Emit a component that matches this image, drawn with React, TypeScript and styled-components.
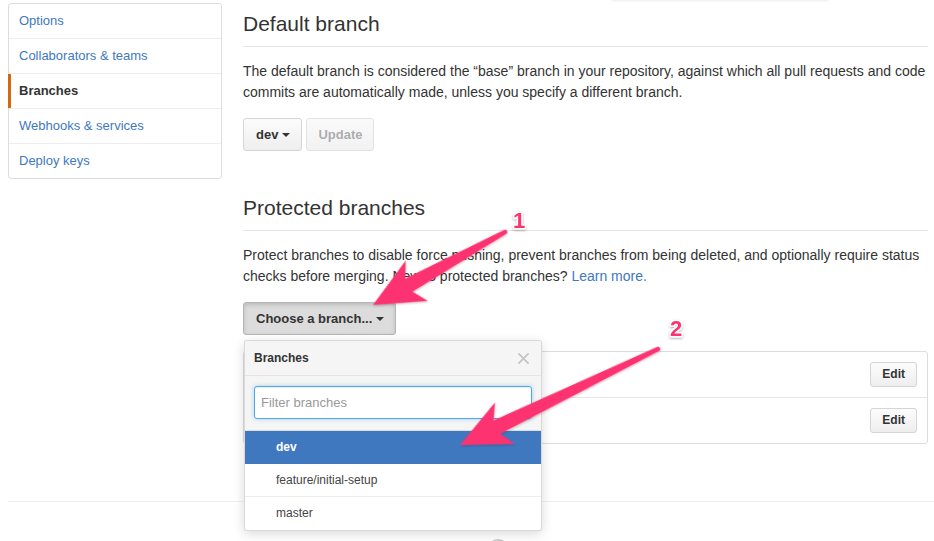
import React from "react";
import styled, { createGlobalStyle, css } from "styled-components";

const GlobalStyle = createGlobalStyle`
  html, body {
    margin: 0;
    padding: 0;
    overflow: hidden;
    background: #fff;
  }
  body {
    font-family: "Liberation Sans", Arial, Helvetica, sans-serif;
    font-size: 14px;
    line-height: 21px;
    color: #333;
  }
  * { box-sizing: border-box; }
`;

const Page = styled.div`
  position: relative;
  width: 934px;
  height: 541px;
  overflow: hidden;
`;

const Container = styled.div`
  margin-left: 8px;
  width: 980px;
`;

const Columns = styled.div`
  display: grid;
  grid-template-columns: 214px 685px;
  column-gap: 21px;
  align-items: start;
`;

const SideMenu = styled.nav`
  margin-top: 3px;
  border: 1px solid #ddd;
  border-radius: 3px;
  background: #fff;
  display: flex;
  flex-direction: column;
`;

const SideItem = styled.a<{ $selected?: boolean }>`
  position: relative;
  display: block;
  padding: 8px 10px;
  line-height: 18px;
  font-size: 13px;
  color: #4078c0;
  text-decoration: none;
  border-bottom: 1px solid #eee;
  &:last-child { border-bottom: 0; }
  ${(p) =>
    p.$selected &&
    css`
      color: #333;
      font-weight: bold;
      &::before {
        content: "";
        position: absolute;
        left: -1px;
        top: 0;
        bottom: 0;
        width: 3px;
        background: #d26911;
      }
    `}
`;

const Main = styled.main`
  display: flex;
  flex-direction: column;
  align-items: stretch;
`;

const Subhead = styled.div<{ $spaced?: boolean }>`
  padding-top: 9px;
  padding-bottom: 7px;
  border-bottom: 1px solid #e5e5e5;
  margin-top: ${(p) => (p.$spaced ? "33px" : "0")};
`;

const SubheadTitle = styled.h2`
  margin: 0;
  font-size: 21px;
  line-height: 30px;
  font-weight: normal;
  color: #333;
`;

const Para = styled.p`
  margin: 14px 0 15px;
  font-size: 14px;
  line-height: 21px;
  color: #333;
`;

const Link = styled.a`
  color: #4078c0;
  text-decoration: none;
`;

const ButtonRow = styled.div`
  display: flex;
  gap: 4px;
  align-items: flex-start;
`;

const Btn = styled.button<{ $active?: boolean; $small?: boolean }>`
  display: inline-flex;
  align-items: center;
  padding: 6px 11px 6px 12px;
  font-family: "Liberation Sans", Arial, Helvetica, sans-serif;
  font-size: 13px;
  font-weight: bold;
  line-height: 19px;
  color: #333;
  background: linear-gradient(#fcfcfc, #eee);
  border: 1px solid #d5d5d5;
  border-radius: 3px;
  cursor: pointer;
  white-space: nowrap;
  &:disabled {
    padding: 6px 11px;
    color: rgba(51, 51, 51, 0.4);
    background: linear-gradient(#fafafa, #f2f2f2);
    border-color: #e3e3e3;
    cursor: default;
  }
  ${(p) =>
    p.$active &&
    css`
      background: #dcdcdc;
      border-color: #b5b5b5;
      box-shadow: inset 0 2px 4px rgba(0, 0, 0, 0.15);
    `}
  ${(p) =>
    p.$small &&
    css`
      padding: 3px 11px;
      font-size: 12px;
      line-height: 17px;
    `}
`;

const Caret = styled.span`
  display: inline-block;
  width: 0;
  height: 0;
  margin-left: 4px;
  border-top: 4px solid #333;
  border-left: 4px solid transparent;
  border-right: 4px solid transparent;
`;

const MenuWrap = styled.div`
  position: relative;
  align-self: flex-start;
`;

const MenuModal = styled.div`
  position: absolute;
  top: calc(100% + 5px);
  left: 1px;
  width: 298px;
  z-index: 10;
  background: #fff;
  border: 1px solid rgba(0, 0, 0, 0.15);
  border-radius: 3px;
  box-shadow: 0 3px 12px rgba(0, 0, 0, 0.15);
  overflow: hidden;
`;

const MenuHeader = styled.div`
  height: 35px;
  padding: 0 9px;
  display: flex;
  align-items: center;
  justify-content: space-between;
  background: #f5f5f5;
  border-bottom: 1px solid #e5e5e5;
`;

const MenuTitle = styled.span`
  font-size: 12px;
  font-weight: bold;
  color: #333;
`;

const MenuClose = styled.svg`
  display: block;
  margin-right: 3px;
`;

const MenuFilters = styled.div`
  padding: 10px 9px 11px;
  background: #f5f5f5;
  border-bottom: 1px solid #ddd;
`;

const FilterInput = styled.input`
  display: block;
  width: 100%;
  height: 33px;
  padding: 6px 6px;
  font-family: "Liberation Sans", Arial, Helvetica, sans-serif;
  font-size: 13px;
  line-height: 19px;
  color: #333;
  background: #fff;
  border: 1px solid #51a7e8;
  border-radius: 3px;
  outline: none;
  box-shadow: inset 0 1px 2px rgba(0, 0, 0, 0.075),
    0 0 4px rgba(81, 167, 232, 0.5);
  &::placeholder { color: #999; }
`;

const MenuItem = styled.div<{ $focus?: boolean }>`
  height: 33px;
  padding: 0 10px 0 31px;
  line-height: 32px;
  font-size: 12px;
  color: #444;
  border-bottom: 1px solid #eee;
  &:last-child { border-bottom: 0; }
  ${(p) =>
    p.$focus &&
    css`
      color: #fff;
      font-weight: bold;
      background: #4078c0;
      border-bottom-color: #4078c0;
    `}
`;

const ProtectedList = styled.div`
  margin-top: 16px;
  border: 1px solid #ddd;
  border-radius: 3px;
`;

const ProtectedRow = styled.div`
  display: flex;
  align-items: center;
  justify-content: space-between;
  padding: 10px;
  border-bottom: 1px solid #e5e5e5;
  &:last-child { border-bottom: 0; }
`;

const BranchName = styled.span`
  font-size: 13px;
  font-weight: bold;
  color: #333;
`;

const Footer = styled.footer`
  margin-top: 57px;
  padding-top: 36px;
  border-top: 1px solid #eee;
  display: flex;
  justify-content: center;
`;

const FooterMark = styled.svg`
  display: block;
`;

const TopEdge = styled.div`
  position: absolute;
  top: -12px;
  left: 612px;
  width: 216px;
  height: 12px;
  background: #fff;
  box-shadow: 0 1px 2px rgba(0, 0, 0, 0.08);
`;

const Overlay = styled.svg`
  position: absolute;
  left: 0;
  top: 0;
  z-index: 20;
  pointer-events: none;
`;

const PINK = "#fd3370";

function arrowPath(len: number) {
  const h = 50;
  const w = 23;
  const n = 41;
  const nw = 7.5;
  const t = 2.3;
  return `M0,0 L${h},${-w} L${n},${-nw} L${len},${-t} A${t},${t} 0 0 1 ${len},${t} L${n},${nw} L${h},${w} Z`;
}

function Arrow({ tip, tail }: { tip: [number, number]; tail: [number, number] }) {
  const dx = tail[0] - tip[0];
  const dy = tail[1] - tip[1];
  const len = Math.sqrt(dx * dx + dy * dy);
  const ang = (Math.atan2(dy, dx) * 180) / Math.PI;
  return (
    <path
      d={arrowPath(len)}
      fill={PINK}
      transform={`translate(${tip[0]} ${tip[1]}) rotate(${ang})`}
      filter="url(#arrowShadow)"
    />
  );
}

function Marker({ x, y, label }: { x: number; y: number; label: string }) {
  return (
    <text
      x={x}
      y={y}
      textAnchor="middle"
      fontFamily='"Liberation Sans", Arial, sans-serif'
      fontWeight="bold"
      fontSize="22"
      fill={PINK}
      stroke="#fff"
      strokeWidth="3"
      strokeLinejoin="round"
      paintOrder="stroke"
      filter="url(#numShadow)"
    >
      {label}
    </text>
  );
}

export default function App() {
  return (
    <>
      <GlobalStyle />
      <Page>
        <TopEdge />
        <Container>
          <Columns>
            <SideMenu>
              <SideItem href="#">Options</SideItem>
              <SideItem href="#">Collaborators &amp; teams</SideItem>
              <SideItem href="#" $selected>
                Branches
              </SideItem>
              <SideItem href="#">Webhooks &amp; services</SideItem>
              <SideItem href="#">Deploy keys</SideItem>
            </SideMenu>

            <Main>
              <Subhead>
                <SubheadTitle>Default branch</SubheadTitle>
              </Subhead>
              <Para>
                The default branch is considered the “base” branch in your repository, against which all pull requests and code commits are automatically made, unless you specify a different branch.
              </Para>
              <ButtonRow>
                <Btn>
                  dev
                  <Caret />
                </Btn>
                <Btn disabled>Update</Btn>
              </ButtonRow>

              <Subhead $spaced>
                <SubheadTitle>Protected branches</SubheadTitle>
              </Subhead>
              <Para>
                Protect branches to disable force pushing, prevent branches from being deleted, and optionally require status checks before merging. New to protected branches? <Link href="#">Learn more.</Link>
              </Para>

              <MenuWrap>
                <Btn $active>
                  Choose a branch...
                  <Caret />
                </Btn>
                <MenuModal>
                  <MenuHeader>
                    <MenuTitle>Branches</MenuTitle>
                    <MenuClose width="11" height="11" viewBox="0 0 12 12">
                      <path d="M1 1 L11 11 M11 1 L1 11" stroke="#c4c4c4" strokeWidth="1.8" strokeLinecap="round" />
                    </MenuClose>
                  </MenuHeader>
                  <MenuFilters>
                    <FilterInput placeholder="Filter branches" autoFocus />
                  </MenuFilters>
                  <MenuItem $focus>dev</MenuItem>
                  <MenuItem>feature/initial-setup</MenuItem>
                  <MenuItem>master</MenuItem>
                </MenuModal>
              </MenuWrap>

              <ProtectedList>
                <ProtectedRow>
                  <BranchName>master</BranchName>
                  <Btn $small>Edit</Btn>
                </ProtectedRow>
                <ProtectedRow>
                  <BranchName>dev</BranchName>
                  <Btn $small>Edit</Btn>
                </ProtectedRow>
              </ProtectedList>
            </Main>
          </Columns>

          <Footer>
            <FooterMark width="24" height="24" viewBox="0 0 24 24">
              <circle cx="12" cy="12" r="11" fill="#ccc" />
            </FooterMark>
          </Footer>
        </Container>

        <Overlay width="934" height="541" viewBox="0 0 934 541">
          <defs>
            <filter id="arrowShadow" x="-20%" y="-20%" width="140%" height="140%">
              <feDropShadow dx="0" dy="1" stdDeviation="1" floodColor="#000" floodOpacity="0.25" />
            </filter>
            <filter id="numShadow" x="-50%" y="-50%" width="200%" height="200%">
              <feDropShadow dx="0" dy="1" stdDeviation="0.8" floodColor="#000" floodOpacity="0.35" />
            </filter>
          </defs>
          <Arrow tip={[373, 305]} tail={[505, 232]} />
          <Arrow tip={[460, 445]} tail={[658, 349]} />
          <Marker x={519} y={228} label="1" />
          <Marker x={676} y={336} label="2" />
        </Overlay>
      </Page>
    </>
  );
}
